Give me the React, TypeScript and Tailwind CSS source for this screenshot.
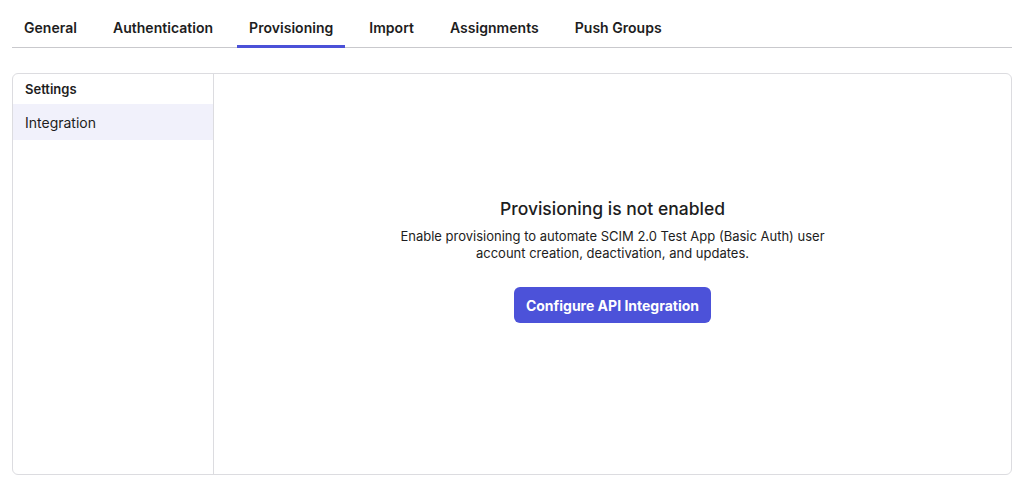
import { useState } from "react";

const tabs = ["General", "Authentication", "Provisioning", "Import", "Assignments", "Push Groups"];

export default function App() {
  const [active, setActive] = useState("Provisioning");

  return (
    <div
      className="min-h-screen bg-white text-[#1d1d21]"
      style={{ fontFamily: "Inter, 'Noto Sans', sans-serif" }}
    >
      {/* tabs */}
      <div className="ml-3 mr-[22px] flex gap-3 border-b border-[#c9c9cd]">
        {tabs.map((t) => (
          <button
            key={t}
            onClick={() => setActive(t)}
            className={
              "-mb-px h-12 border-b-[3px] px-3 pt-[10px] text-[14px] font-semibold tracking-[0.002em] " +
              (active === t ? "border-[#4b51d8]" : "border-transparent")
            }
          >
            {t}
          </button>
        ))}
      </div>

      {/* card */}
      <div className="ml-3 mr-[22px] mt-[25px] flex h-[402px] rounded-md border border-[#dcdce0]">
        <aside className="w-[201px] shrink-0 border-r border-[#dcdce0]">
          <div className="flex h-[30px] items-center px-3 pt-[2px] text-[13px] font-semibold">Settings</div>
          <div className="flex h-9 items-center bg-[#f1f1fb] px-3 text-[14px]">Integration</div>
        </aside>

        <main className="flex flex-1 flex-col items-center pt-[123px]">
          <h2 className="text-[17.5px] leading-6 font-medium">Provisioning is not enabled</h2>
          <p className="mt-[7px] max-w-[440px] text-center text-[13px] leading-[17px]">
            Enable provisioning to automate SCIM 2.0 Test App (Basic Auth) user account creation,
            deactivation, and updates.
          </p>
          <button className="mt-[25px] h-9 w-[197px] rounded-md bg-[#4c52d9] text-[14px] font-bold text-white">
            Configure API Integration
          </button>
        </main>
      </div>
    </div>
  );
}
